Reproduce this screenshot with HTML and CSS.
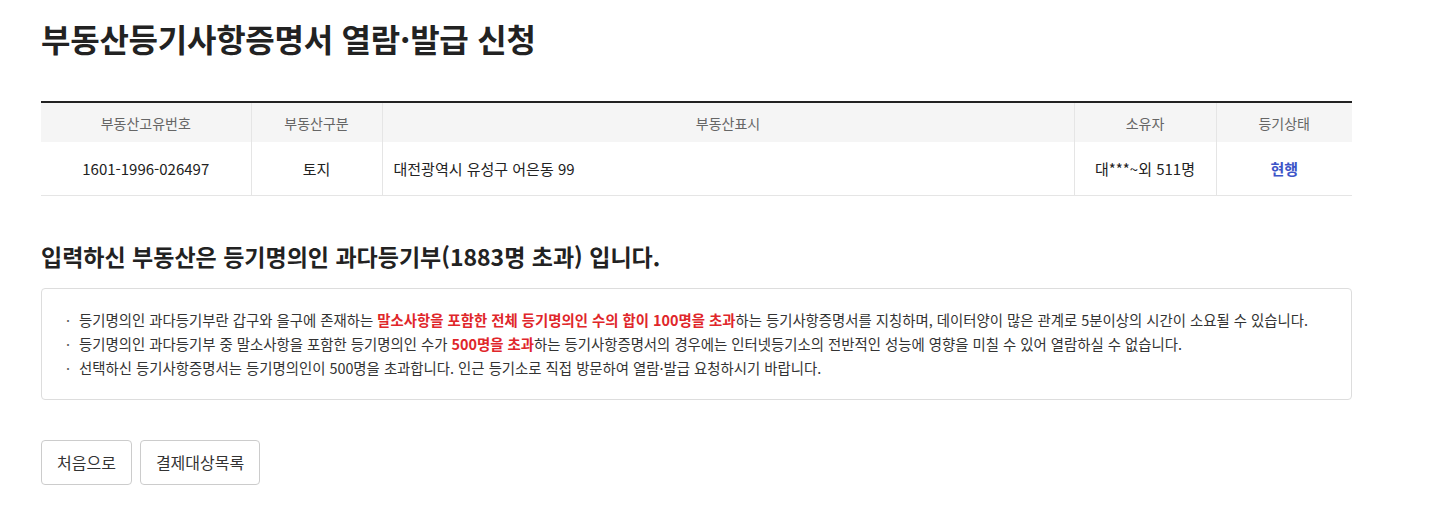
FILE: index.html
```html
<!DOCTYPE html>
<html lang="ko">
<head>
    <meta charset="UTF-8">
    <meta name="viewport" content="width=device-width, initial-scale=1.0">
    <title>부동산등기사항증명서 열람·발급 신청</title>
    <link rel="stylesheet" href="styles.css">
</head>
<body>

    <div class="container">
        <h1>부동산등기사항증명서 열람·발급 신청</h1>

        <!-- 부동산 정보 -->
        <table class="estate-table">
            <colgroup>
                <col class="col-no">
                <col class="col-type">
                <col>
                <col class="col-owner">
                <col class="col-state">
            </colgroup>
            <thead>
                <tr>
                    <th>부동산고유번호</th>
                    <th>부동산구분</th>
                    <th>부동산표시</th>
                    <th>소유자</th>
                    <th>등기상태</th>
                </tr>
            </thead>
            <tbody>
                <tr>
                    <td>1601-1996-026497</td>
                    <td>토지</td>
                    <td class="left">대전광역시 유성구 어은동 99</td>
                    <td>대***~외 511명</td>
                    <td class="state">현행</td>
                </tr>
            </tbody>
        </table>

        <h2>입력하신 부동산은 등기명의인 과다등기부(1883명 초과) 입니다.</h2>

        <!-- 안내 -->
        <ul class="notice">
            <li>등기명의인 과다등기부란 갑구와 을구에 존재하는 <strong>말소사항을 포함한 전체 등기명의인 수의 합이 100명을 초과</strong>하는 등기사항증명서를 지칭하며, 데이터양이 많은 관계로 5분이상의 시간이 소요될 수 있습니다.</li>
            <li>등기명의인 과다등기부 중 말소사항을 포함한 등기명의인 수가 <strong>500명을 초과</strong>하는 등기사항증명서의 경우에는 인터넷등기소의 전반적인 성능에 영향을 미칠 수 있어 열람하실 수 없습니다.</li>
            <li>선택하신 등기사항증명서는 등기명의인이 500명을 초과합니다. 인근 등기소로 직접 방문하여 열람·발급 요청하시기 바랍니다.</li>
        </ul>

        <div class="buttons">
            <button type="button">처음으로</button>
            <button type="button">결제대상목록</button>
        </div>
    </div>

</body>
</html>
```

FILE: styles.css
```css
* {
    margin: 0;
    padding: 0;
    box-sizing: border-box;
}

body {
    font-family: 'Noto Sans CJK KR', 'Noto Sans', sans-serif;
    background: #fff;
    color: #222;
}

.container {
    width: 1311px;
    margin-left: 41px;
    padding-top: 14px;
}

.container h1 {
    font-size: 32px;
    font-weight: bold;
    color: #222;
    line-height: 48px;
    letter-spacing: -0.25px;
    margin-bottom: 39px;
}

/* Table */
.estate-table {
    width: 100%;
    border-collapse: collapse;
    border-top: 2px solid #222;
    font-size: 14px;
}

.col-no { width: 210px; }
.col-type { width: 131px; }
.col-owner { width: 142px; }
.col-state { width: 136px; }

.estate-table th {
    background: #f5f5f5;
    color: #666;
    font-weight: normal;
    height: 40px;
    border-left: 1px solid #e5e5e5;
}

.estate-table td {
    height: 53px;
    font-size: 15px;
    text-align: center;
    border-left: 1px solid #e5e5e5;
    border-bottom: 1px solid #e5e5e5;
}

.estate-table th:first-child,
.estate-table td:first-child {
    border-left: none;
}

.estate-table td.left {
    text-align: left;
    padding-left: 11px;
}

.estate-table td.state {
    color: #3d55c8;
    font-weight: bold;
}

/* Notice */
.container h2 {
    font-size: 23px;
    font-weight: bold;
    line-height: 32px;
    margin-top: 44px;
    margin-bottom: 16px;
}

.notice {
    list-style: none;
    border: 1px solid #ddd;
    border-radius: 4px;
    padding: 19px 24px;
    font-size: 14.4px;
    line-height: 24px;
    color: #333;
}

.notice li::before {
    content: "·";
    margin-right: 9px;
    color: #555;
}

.notice strong {
    color: #e0262a;
}

/* Buttons */
.buttons {
    display: flex;
    gap: 8px;
    margin-top: 40px;
}

button {
    height: 45px;
    padding: 0 15px;
    background-color: #fff;
    color: #333;
    border: 1px solid #ccc;
    border-radius: 4px;
    font-family: inherit;
    font-size: 16px;
    cursor: pointer;
}
```
